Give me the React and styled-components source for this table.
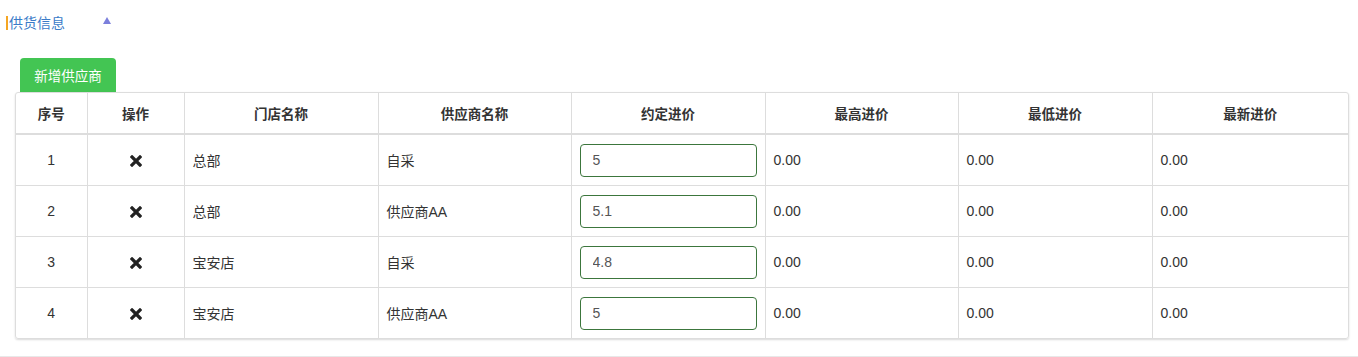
import styled, { createGlobalStyle } from "styled-components";

const GlobalStyle = createGlobalStyle`
  body {
    margin: 0;
    background: #fff;
    font-family: "Liberation Sans", "Noto Sans CJK SC", sans-serif;
    font-size: 14px;
    color: #333;
  }
`;

const Page = styled.div`
  width: 1358px;
  height: 357px;
  box-sizing: border-box;
  border-bottom: 1px solid #e8e8e8;
`;

const TitleBar = styled.div`
  display: flex;
  align-items: center;
  height: 14px;
  padding: 16px 0 0 6px;
`;

const Title = styled.span`
  border-left: 2px solid #f5a623;
  padding-left: 1px;
  line-height: 14px;
  color: #3a7bc8;
  font-size: 14px;
  width: 94px;
`;

const Caret = styled.span`
  width: 0;
  height: 0;
  margin-top: -6px;
  border-left: 4px solid transparent;
  border-right: 4px solid transparent;
  border-bottom: 7px solid #7b7fdc;
`;

const Toolbar = styled.div`
  padding: 28px 0 0 20px;
`;

const AddButton = styled.button`
  display: block;
  height: 34px;
  width: 96px;
  border: none;
  border-radius: 4px 4px 0 0;
  background: #43c553;
  color: #fff;
  font-family: inherit;
  font-size: 13.5px;
  padding: 0;
  cursor: pointer;
`;

const TableWrap = styled.div`
  margin-left: 15px;
  width: 1332px;
  border: 1px solid #ddd;
  border-radius: 3px;
  box-shadow: 0 1px 2px rgba(0, 0, 0, 0.15);
  overflow: hidden;
`;

const Table = styled.table`
  width: 100%;
  border-collapse: collapse;
  table-layout: fixed;
`;

const Th = styled.th`
  height: 40px;
  padding: 0 8px;
  border-left: 1px solid #ddd;
  border-bottom: 2px solid #ddd;
  font-size: 13.5px;
  font-weight: bold;
  text-align: center;
  &:first-child { border-left: none; }
`;

const Td = styled.td`
  height: 50px;
  padding: 0 8px;
  border-left: 1px solid #ddd;
  border-top: 1px solid #ddd;
  text-align: ${(p) => (p.$center ? "center" : "left")};
  &:first-child { border-left: none; }
`;

const PriceInput = styled.input`
  box-sizing: border-box;
  width: 177px;
  height: 33px;
  border: 1px solid #3c763d;
  border-radius: 4px;
  padding: 0 12px;
  font-family: inherit;
  font-size: 14px;
  color: #555;
  outline: none;
`;

const RemoveIcon = () => (
  <svg width="12" height="12" viewBox="0 0 12 12" style={{ verticalAlign: "middle" }}>
    <path d="M2 2 L10 10 M10 2 L2 10" stroke="#222" strokeWidth="3.2" strokeLinecap="square" />
  </svg>
);

const columns = [
  { title: "序号", width: 71 },
  { title: "操作", width: 97 },
  { title: "门店名称", width: 194 },
  { title: "供应商名称", width: 193 },
  { title: "约定进价", width: 194 },
  { title: "最高进价", width: 193 },
  { title: "最低进价", width: 194 },
  { title: "最新进价", width: 196 },
];

const rows = [
  { store: "总部", supplier: "自采", price: "5" },
  { store: "总部", supplier: "供应商AA", price: "5.1" },
  { store: "宝安店", supplier: "自采", price: "4.8" },
  { store: "宝安店", supplier: "供应商AA", price: "5" },
];

export default function App() {
  return (
    <Page>
      <GlobalStyle />
      <TitleBar>
        <Title>供货信息</Title>
        <Caret />
      </TitleBar>
      <Toolbar>
        <AddButton>新增供应商</AddButton>
      </Toolbar>
      <TableWrap>
        <Table>
          <colgroup>
            {columns.map((c) => (
              <col key={c.title} style={{ width: c.width }} />
            ))}
          </colgroup>
          <thead>
            <tr>
              {columns.map((c) => (
                <Th key={c.title}>{c.title}</Th>
              ))}
            </tr>
          </thead>
          <tbody>
            {rows.map((r, i) => (
              <tr key={i}>
                <Td $center>{i + 1}</Td>
                <Td $center><RemoveIcon /></Td>
                <Td>{r.store}</Td>
                <Td>{r.supplier}</Td>
                <Td><PriceInput defaultValue={r.price} /></Td>
                <Td>0.00</Td>
                <Td>0.00</Td>
                <Td>0.00</Td>
              </tr>
            ))}
          </tbody>
        </Table>
      </TableWrap>
    </Page>
  );
}
